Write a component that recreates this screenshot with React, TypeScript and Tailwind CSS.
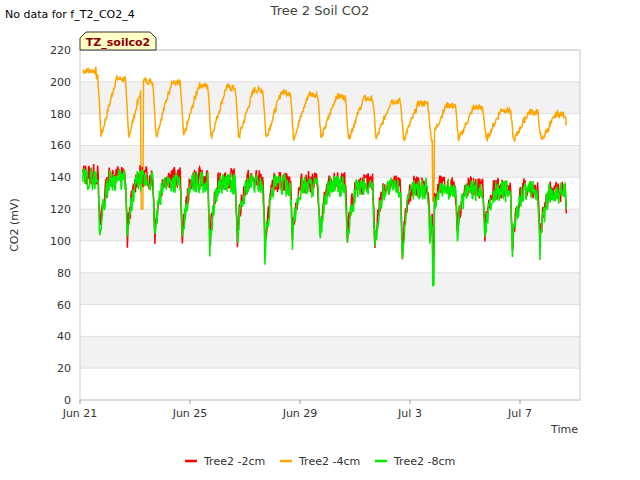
const X0 = 80, X1 = 580, Y0 = 50, Y1 = 400;
const dayX = (d: number) => X0 + d * 27.5;
const yv = (v: number) => Y1 - (v / 220) * (Y1 - Y0);

function rng(seed: number) {
  let s = seed;
  return () => {
    s = (s * 9301 + 49297) % 233280;
    return s / 233280;
  };
}

const dipLows = [98, 100, 95, 98, 93, 92, 96, 88, 97, 96, 92, 90, 88, 100, 104, 100, 90, 92];

function series(kind: 'o' | 'r' | 'g') {
  const r = rng(kind === 'o' ? 7 : kind === 'r' ? 13 : 29);
  const pts: string[] = [];
  for (let i = 0; i <= 17.6 * 48; i++) {
    const d = 0.1 + i / 48;
    const ph = (d + 0.35) % 1;
    const day = Math.floor(d + 0.35);
    let v: number;
    if (kind === 'o') {
      const top = 204 - d * 1.4;
      const low = 166 - d * 0.2;
      v = ph < 0.12 ? top - (top - low) * (ph / 0.12) : low + (top - low) * Math.min(1, (ph - 0.12) / 0.55);
      if (d < 0.6) v = 207;
      v += (r() - 0.5) * 4;
      if (Math.abs(d - 2.25) < 0.04) v = 120;
      if (Math.abs(d - 12.85) < 0.04) v = 125;
    } else {
      const hi = kind === 'r' ? 142 - d * 0.6 : 139 - d * 0.5;
      const lo = dipLows[day % dipLows.length] + (kind === 'r' ? 3 : 0);
      v = ph < 0.08 ? hi - (hi - lo) * (ph / 0.08) : lo + (hi - lo) * Math.min(1, Math.sqrt((ph - 0.08) / 0.35));
      v += (r() - 0.5) * 14;
      if (Math.abs(d - 12.85) < 0.03) v = kind === 'g' ? 72 : 90;
    }
    pts.push(`${dayX(d).toFixed(1)},${yv(v).toFixed(1)}`);
  }
  return pts.join(' ');
}

const ticks = [0, 20, 40, 60, 80, 100, 120, 140, 160, 180, 200, 220];
const bands = [20, 60, 100, 140, 180];
const xt = [['Jun 21', 0], ['Jun 25', 4], ['Jun 29', 8], ['Jul 3', 12], ['Jul 7', 16]] as const;

export default function App() {
  const o = series('o'), rr = series('r'), g = series('g');
  return (
    <div className="w-[640px] h-[480px] bg-white relative" style={{ fontFamily: '"DejaVu Sans", sans-serif' }}>
      <svg width="640" height="480" className="block" fontFamily="DejaVu Sans, sans-serif">
        <text x="5" y="18" fontSize="11" fill="#000">No data for f_T2_CO2_4</text>
        <text x="320" y="15" fontSize="13" fill="#444" textAnchor="middle">Tree 2 Soil CO2</text>
        {bands.map(b => (
          <rect key={b} x={X0} y={yv(b + 20)} width={X1 - X0} height={yv(b) - yv(b + 20)} fill="#f2f2f2" />
        ))}
        {ticks.map(t => (
          <g key={t}>
            <line x1={X0} x2={X1} y1={yv(t)} y2={yv(t)} stroke="#e0e0e0" strokeWidth="1" />
            <text x={X0 - 9} y={yv(t) + 4} fontSize="11" fill="#333" textAnchor="end">{t}</text>
          </g>
        ))}
        <rect x={X0} y={Y0} width={X1 - X0} height={Y1 - Y0} fill="none" stroke="#ccc" />
        {xt.map(([l, d]) => (
          <g key={l}>
            <line x1={dayX(d)} x2={dayX(d)} y1={Y1} y2={Y1 + 4} stroke="#999" />
            <text x={dayX(d)} y={Y1 + 17} fontSize="11" fill="#333" textAnchor="middle">{l}</text>
          </g>
        ))}
        <text x="578" y="433" fontSize="11" fill="#333" textAnchor="end">Time</text>
        <text x="18" y="225" fontSize="11" fill="#333" textAnchor="middle" transform="rotate(-90 18 225)">CO2 (mV)</text>
        <polyline points={o} fill="none" stroke="#ffa500" strokeWidth="1.5" />
        <polyline points={rr} fill="none" stroke="#ff0000" strokeWidth="1.5" />
        <polyline points={g} fill="none" stroke="#00ee00" strokeWidth="1.5" />
        <path d="M80,50 L80,38 L86,32 L150,32 L156,38 L156,50 Z" fill="#ffffc8" stroke="#000" strokeWidth="0.8" />
        <text x="118" y="46" fontSize="11" fontWeight="bold" fill="#8b0000" textAnchor="middle">TZ_soilco2</text>
        {[['Tree2 -2cm', '#ff0000', 185], ['Tree2 -4cm', '#ffa500', 280], ['Tree2 -8cm', '#00ee00', 375]].map(([l, c, x]) => (
          <g key={l as string}>
            <line x1={x as number} x2={(x as number) + 12} y1={461} y2={461} stroke={c as string} strokeWidth="2.5" />
            <text x={(x as number) + 19} y={465} fontSize="11" fill="#333">{l}</text>
          </g>
        ))}
      </svg>
    </div>
  );
}
